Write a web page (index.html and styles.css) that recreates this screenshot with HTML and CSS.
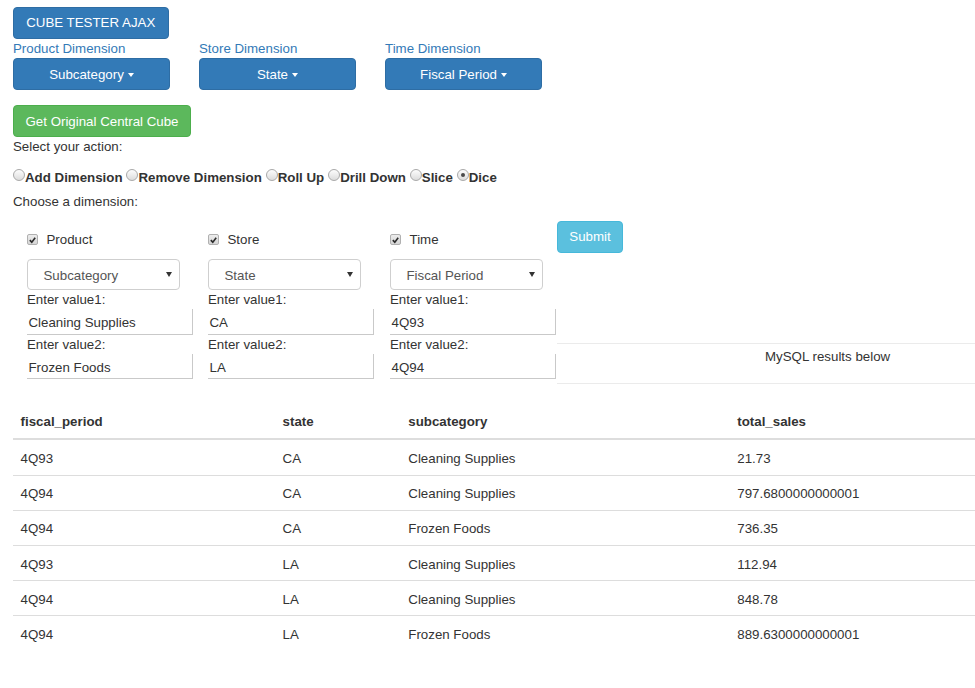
FILE: index.html
```html
<!DOCTYPE html>
<html>
<head>
<meta charset="utf-8">
<title>Cube Tester Ajax</title>
<link rel="stylesheet" href="styles.css">
</head>
<body>
<div class="page">
  <button class="btn btn-primary btn-title">CUBE TESTER AJAX</button>

  <div class="dim-row">
    <div class="dim-group">
      <div class="dim-label">Product Dimension</div>
      <button class="btn btn-primary btn-dim">Subcategory <span class="caret"></span></button>
    </div>
    <div class="dim-group">
      <div class="dim-label">Store Dimension</div>
      <button class="btn btn-primary btn-dim">State <span class="caret"></span></button>
    </div>
    <div class="dim-group">
      <div class="dim-label">Time Dimension</div>
      <button class="btn btn-primary btn-dim">Fiscal Period <span class="caret"></span></button>
    </div>
  </div>

  <button class="btn btn-success btn-cube">Get Original Central Cube</button>

  <div class="line">Select your action:</div>

  <div class="radio-row">
    <label class="radio-opt"><span class="radio"></span>Add Dimension</label>
    <label class="radio-opt"><span class="radio"></span>Remove Dimension</label>
    <label class="radio-opt"><span class="radio"></span>Roll Up</label>
    <label class="radio-opt"><span class="radio"></span>Drill Down</label>
    <label class="radio-opt"><span class="radio"></span>Slice</label>
    <label class="radio-opt"><span class="radio checked"></span>Dice</label>
  </div>

  <div class="line choose">Choose a dimension:</div>

  <div class="form-row">
    <div class="form-col col-a">
      <div class="check-row"><span class="checkbox"><svg viewBox="0 0 10 10" width="10" height="10"><path d="M2 5.2 L4.2 7.4 L8 2.6" fill="none" stroke="#2b2b2b" stroke-width="1.8"/></svg></span>Product</div>
      <div class="select-box"><span class="select-text">Subcategory</span><span class="select-arrow"></span></div>
      <div class="field-label">Enter value1:</div>
      <div class="text-input">Cleaning Supplies</div>
      <div class="field-label">Enter value2:</div>
      <div class="text-input">Frozen Foods</div>
    </div>
    <div class="form-col col-b">
      <div class="check-row"><span class="checkbox"><svg viewBox="0 0 10 10" width="10" height="10"><path d="M2 5.2 L4.2 7.4 L8 2.6" fill="none" stroke="#2b2b2b" stroke-width="1.8"/></svg></span>Store</div>
      <div class="select-box"><span class="select-text">State</span><span class="select-arrow"></span></div>
      <div class="field-label">Enter value1:</div>
      <div class="text-input">CA</div>
      <div class="field-label">Enter value2:</div>
      <div class="text-input">LA</div>
    </div>
    <div class="form-col col-c">
      <div class="check-row"><span class="checkbox"><svg viewBox="0 0 10 10" width="10" height="10"><path d="M2 5.2 L4.2 7.4 L8 2.6" fill="none" stroke="#2b2b2b" stroke-width="1.8"/></svg></span>Time</div>
      <div class="select-box"><span class="select-text">Fiscal Period</span><span class="select-arrow"></span></div>
      <div class="field-label">Enter value1:</div>
      <div class="text-input">4Q93</div>
      <div class="field-label">Enter value2:</div>
      <div class="text-input">4Q94</div>
    </div>
    <div class="form-side">
      <button class="btn btn-info btn-submit">Submit</button>
      <div class="results-note">MySQL results below</div>
    </div>
  </div>

  <table class="results">
    <colgroup>
      <col class="c1"><col class="c2"><col class="c3"><col class="c4">
    </colgroup>
    <thead>
      <tr><th>fiscal_period</th><th>state</th><th>subcategory</th><th>total_sales</th></tr>
    </thead>
    <tbody>
      <tr><td>4Q93</td><td>CA</td><td>Cleaning Supplies</td><td>21.73</td></tr>
      <tr><td>4Q94</td><td>CA</td><td>Cleaning Supplies</td><td>797.6800000000001</td></tr>
      <tr><td>4Q94</td><td>CA</td><td>Frozen Foods</td><td>736.35</td></tr>
      <tr><td>4Q93</td><td>LA</td><td>Cleaning Supplies</td><td>112.94</td></tr>
      <tr><td>4Q94</td><td>LA</td><td>Cleaning Supplies</td><td>848.78</td></tr>
      <tr><td>4Q94</td><td>LA</td><td>Frozen Foods</td><td>889.6300000000001</td></tr>
    </tbody>
  </table>
</div>
</body>
</html>
```

FILE: styles.css
```css
html, body {
  margin: 0;
  padding: 0;
  background: #fff;
}
body {
  font-family: "Liberation Sans", Arial, Helvetica, sans-serif;
  font-size: 13.3px;
  line-height: 19px;
  color: #333;
}
.page {
  padding: 6.5px 0 0 13px;
}
.btn {
  display: flex;
  align-items: center;
  justify-content: center;
  box-sizing: border-box;
  height: 32px;
  padding: 0 11.5px;
  font-family: inherit;
  font-size: 13.3px;
  color: #fff;
  border: 1px solid transparent;
  border-radius: 4px;
  cursor: pointer;
}
.btn-primary {
  background: #337ab7;
  border-color: #2e6da4;
}
.btn-success {
  background: #5cb85c;
  border-color: #4cae4c;
}
.btn-info {
  background: #5bc0de;
  border-color: #46b8da;
}
.btn-title {
  width: 155.5px;
}
.dim-row {
  display: flex;
  gap: 29px;
}
.dim-group {
  width: 157px;
}
.dim-label {
  color: #337ab7;
  height: 19.5px;
}
.btn-dim {
  width: 157px;
  padding-top: 1px;
}
.caret {
  display: inline-block;
  width: 0;
  height: 0;
  margin-left: 4px;
  border-top: 4px solid #fff;
  border-left: 3.8px solid transparent;
  border-right: 3.8px solid transparent;
}
.btn-cube {
  margin-top: 15px;
  width: 178px;
}
.line {
  height: 19px;
}
.radio-row {
  display: flex;
  align-items: center;
  margin: 11.5px 0 5px;
  height: 19px;
  font-weight: bold;
}
.radio-opt {
  display: inline-flex;
  align-items: center;
  margin-right: 3.9px;
}
.radio {
  box-sizing: border-box;
  display: inline-flex;
  align-items: center;
  justify-content: center;
  width: 12px;
  height: 12px;
  margin-bottom: 4px;
  border: 1px solid #a9a9a9;
  border-radius: 50%;
  background: linear-gradient(#fdfdfd, #dcdcdc);
}
.radio.checked::after {
  content: "";
  width: 4px;
  height: 4px;
  border-radius: 50%;
  background: #4a4a4a;
}
.choose {
  margin-bottom: 10px;
}
.form-row {
  display: flex;
  padding-left: 14px;
}
.col-a { width: 181px; }
.col-b { width: 182px; }
.col-c { width: 167px; }
.form-col {
  flex: none;
}
.check-row {
  display: flex;
  align-items: center;
  height: 38px;
}
.checkbox {
  box-sizing: border-box;
  display: inline-flex;
  align-items: center;
  justify-content: center;
  width: 11px;
  height: 11px;
  margin-right: 8.5px;
  border: 1px solid #b0b0b0;
  border-radius: 2px;
  background: linear-gradient(#ececec, #d6d6d6);
}
.select-box {
  box-sizing: border-box;
  position: relative;
  display: flex;
  align-items: center;
  width: 152.5px;
  height: 31.5px;
  padding: 2px 0 0 15.5px;
  border: 1px solid #cfcfcf;
  border-radius: 4px;
  color: #555;
  background: #fff;
}
.select-arrow {
  position: absolute;
  right: 6.5px;
  top: 12.5px;
  width: 0;
  height: 0;
  border-top: 5px solid #333;
  border-left: 3px solid transparent;
  border-right: 3px solid transparent;
}
.field-label {
  height: 19px;
}
.text-input {
  box-sizing: border-box;
  display: flex;
  align-items: center;
  width: 166px;
  height: 25.5px;
  padding: 3px 0 0 1.5px;
  border-right: 1px solid #c9c9c9;
  border-bottom: 1px solid #c9c9c9;
  color: #333;
}
.form-side {
  flex: 1;
}
.btn-submit {
  width: 66px;
}
.results-note {
  margin-top: 90px;
  padding: 3px 0 17.5px 208px;
  border-top: 1px solid #ebebeb;
  border-bottom: 1px solid #ebebeb;
  line-height: 19px;
  color: #333;
}
.results {
  margin-top: 19px;
  width: 962px;
  border-collapse: collapse;
  table-layout: fixed;
}
.c1 { width: 262px; }
.c2 { width: 125.7px; }
.c3 { width: 329px; }
.results th {
  text-align: left;
  font-weight: bold;
  padding: 8.5px 7.6px 7.5px;
  line-height: 19px;
  border-bottom: 2px solid #dddddd;
}
.results td {
  padding: 8.5px 7.6px 6.7px;
  line-height: 19px;
  border-top: 1px solid #dddddd;
}
.results tbody tr:first-child td {
  border-top: 0;
  padding-top: 9px;
}
```
